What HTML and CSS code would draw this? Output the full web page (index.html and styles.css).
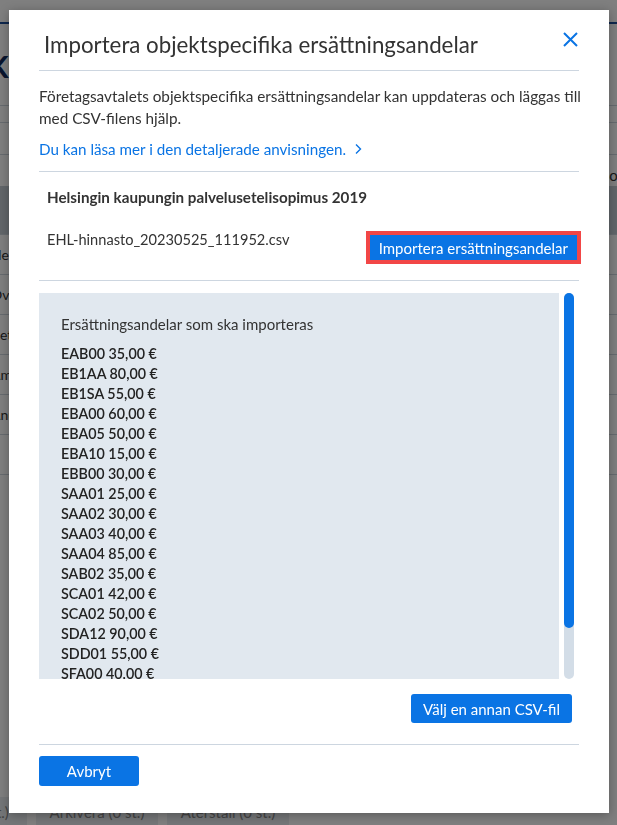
FILE: index.html
```html
<!DOCTYPE html>
<html lang="sv">
  <head>
    <meta charset="UTF-8" />
    <meta name="viewport" content="width=device-width, initial-scale=1.0" />
    <title>Importera objektspecifika ersättningsandelar</title>
    <link rel="stylesheet" href="styles.css">
  </head>
  <body>
    <!-- Page behind the dialog -->
    <div class="page">
      <div class="topbar"></div>
      <h1 class="page-title">Kumppanit</h1>
      <div class="tabs">
        <div class="tab-row"></div>
        <div class="tab-row tall"></div>
      </div>
      <div class="grid-note">Sopimus</div>
      <table class="grid">
        <tr class="grid-head"><th>&nbsp;</th><th>&nbsp;</th></tr>
        <tr><td>Helsingin</td><td></td></tr>
        <tr><td>Överenskommelse</td><td>h.</td></tr>
        <tr><td>Betalning</td><td></td></tr>
        <tr><td>Amanda</td><td></td></tr>
        <tr><td>Anund</td><td>h.</td></tr>
        <tr><td></td><td></td></tr>
      </table>
      <div class="page-actions">
        <span class="page-btn">Radera (0 st.)</span>
        <span class="page-btn">Arkivera (0 st.)</span>
        <span class="page-btn">Återställ (0 st.)</span>
      </div>
    </div>

    <div class="backdrop"></div>

    <div class="modal" role="dialog">
      <div class="modal-header">
        <h2 class="modal-title">Importera objektspecifika ersättningsandelar</h2>
        <button class="close" aria-label="Stäng">
          <svg width="15" height="15" viewBox="0 0 15 15">
            <path d="M1 1 L14 14 M14 1 L1 14" stroke="#0a74e4" stroke-width="2" fill="none"/>
          </svg>
        </button>
      </div>

      <p class="intro">Företagsavtalets objektspecifika ersättningsandelar kan uppdateras och läggas till<br>med CSV-filens hjälp.</p>
      <a class="more" href="#">Du kan läsa mer i den detaljerade anvisningen.
        <svg width="8" height="12" viewBox="0 0 8 12"><path d="M2 1.5 L6.5 6 L2 10.5" stroke="#0a74e4" stroke-width="1.4" fill="none"/></svg>
      </a>

      <div class="contract">
        <div class="contract-name">Helsingin kaupungin palvelusetelisopimus 2019</div>
        <div class="file-row">
          <span class="file-name">EHL-hinnasto_20230525_111952.csv</span>
          <button class="btn btn-import">Importera ersättningsandelar</button>
        </div>
      </div>

      <div class="list-wrap">
        <div class="list">
          <div class="list-title">Ersättningsandelar som ska importeras</div>
          <ul class="rates">
            <li>EAB00 35,00 €</li>
            <li>EB1AA 80,00 €</li>
            <li>EB1SA 55,00 €</li>
            <li>EBA00 60,00 €</li>
            <li>EBA05 50,00 €</li>
            <li>EBA10 15,00 €</li>
            <li>EBB00 30,00 €</li>
            <li>SAA01 25,00 €</li>
            <li>SAA02 30,00 €</li>
            <li>SAA03 40,00 €</li>
            <li>SAA04 85,00 €</li>
            <li>SAB02 35,00 €</li>
            <li>SCA01 42,00 €</li>
            <li>SCA02 50,00 €</li>
            <li>SDA12 90,00 €</li>
            <li>SDD01 55,00 €</li>
            <li>SFA00 40,00 €</li>
            <li>SFB00 45,00 €</li>
            <li>SGA00 60,00 €</li>
          </ul>
        </div>
        <!-- custom scrollbar for the list -->
        <div class="scroll-track">
          <div class="scroll-thumb"></div>
        </div>
      </div>

      <div class="file-actions">
        <button class="btn btn-other">Välj en annan CSV-fil</button>
      </div>

      <div class="modal-footer">
        <button class="btn btn-cancel">Avbryt</button>
      </div>
    </div>
  </body>
</html>
```

FILE: styles.css
```css
body {
    margin: 0;
    font-family: Lato, "Noto Sans", sans-serif;
    color: #333;
    background-color: #fff;
    overflow: hidden;
}

/* Page behind the dialog */
.page {
    height: 825px;
    display: flex;
    flex-direction: column;
}

.topbar {
    height: 22px;
    border-bottom: 2px solid #1d4f9a;
}

.page-title {
    margin: 26px 0 0 -12px;
    font-size: 30px;
    line-height: 32px;
    color: #102a5c;
}

.tabs {
    margin-top: 23px;
    border-top: 1px solid #cfd6de;
}

.tab-row {
    height: 16px;
    border-bottom: 1px solid #cfd6de;
}

.tab-row.tall {
    height: 31px;
}

.grid-note {
    height: 31px;
    line-height: 40px;
    text-align: right;
    font-size: 15px;
    margin-right: -40px;
}

.grid {
    width: calc(100% + 20px);
    margin-left: -9px;
    border-collapse: collapse;
    font-size: 14px;
}

.grid th,
.grid td {
    height: 39px;
    padding: 0;
    border-bottom: 1px solid #cfd6de;
    text-align: left;
}

.grid-head th {
    height: 48px;
    background-color: #c4ccd4;
}

.grid td:last-child {
    text-align: right;
}

.page-actions {
    display: flex;
    gap: 9px;
    margin: auto 0 -2px -95px;
}

.page-btn {
    width: 122px;
    height: 30px;
    line-height: 30px;
    text-align: center;
    background-color: #e8ecf0;
    color: #888;
    font-size: 15px;
}

.backdrop {
    position: fixed;
    inset: 0;
    background-color: rgba(0, 0, 0, 0.5);
}

/* Dialog */
.modal {
    position: absolute;
    top: 10px;
    left: 9px;
    width: 600px;
    box-sizing: border-box;
    padding: 0 30px 27px;
    background-color: #fff;
    box-shadow: 0 2px 10px rgba(0, 0, 0, 0.3);
    display: flex;
    flex-direction: column;
}

.modal-header {
    height: 61px;
    box-sizing: border-box;
    padding: 22px 1px 0 5px;
    display: flex;
    justify-content: space-between;
    align-items: flex-start;
    border-bottom: 1px solid #cdd6e0;
}

.modal-title {
    margin: -2px 0 0;
    font-size: 22.3px;
    font-weight: 400;
    line-height: 30px;
    color: #333;
}

.close {
    border: 0;
    padding: 0;
    background: none;
    width: 15px;
    height: 15px;
    cursor: pointer;
}

.close svg {
    display: block;
}

.intro {
    margin: 14px 0 0;
    font-size: 15.3px;
    line-height: 22px;
    white-space: nowrap;
}

.more {
    margin: 9px 0 0;
    font-size: 15.2px;
    line-height: 22px;
    color: #0a74e4;
    text-decoration: none;
    padding-bottom: 11px;
    border-bottom: 1px solid #cdd6e0;
}

.more svg {
    margin-left: 4px;
}

.contract {
    padding: 14px 0 16px;
    border-bottom: 1px solid #cdd6e0;
}

.contract-name {
    padding-left: 8px;
    font-size: 15.2px;
    font-weight: 700;
    line-height: 22px;
}

.file-row {
    margin-top: 21px;
    display: flex;
    justify-content: space-between;
    align-items: flex-start;
}

.file-name {
    padding-left: 8px;
    font-size: 14.6px;
    line-height: 22px;
}

.btn {
    border: 0;
    border-radius: 3px;
    background-color: #0a74e4;
    color: #fff;
    font-family: inherit;
    font-size: 15px;
    cursor: pointer;
}

.btn-import {
    margin: 2px -2px 0 0;
    height: 33px;
    padding: 0 9px;
    border: 4px solid #f24646;
    border-radius: 0;
}

/* List of rates with its own scrollbar */
.list-wrap {
    margin-top: 12px;
    height: 386px;
    display: flex;
    gap: 5px;
}

.list {
    width: 520px;
    box-sizing: border-box;
    overflow: hidden;
    background-color: #e1e8ef;
    padding: 21px 22px 15px;
}

.list-title {
    font-size: 15px;
    line-height: 20px;
    margin-bottom: 10px;
}

.rates {
    list-style: none;
    margin: 0;
    padding: 0;
}

.rates li {
    font-size: 14.3px;
    font-weight: 600;
    line-height: 20px;
    color: #222;
}

.scroll-track {
    width: 10px;
    height: 386px;
    border-radius: 5px;
    background-color: #d3dde7;
}

.scroll-thumb {
    height: 335px;
    border-radius: 5px;
    background-color: #0a74e4;
}

.file-actions {
    display: flex;
    justify-content: flex-end;
    margin-top: 15px;
    padding-right: 7px;
    padding-bottom: 21px;
    border-bottom: 1px solid #cdd6e0;
}

.btn-other {
    height: 29px;
    padding: 0 12px;
}

.modal-footer {
    padding-top: 11px;
}

.btn-cancel {
    width: 100px;
    height: 30px;
}
```
